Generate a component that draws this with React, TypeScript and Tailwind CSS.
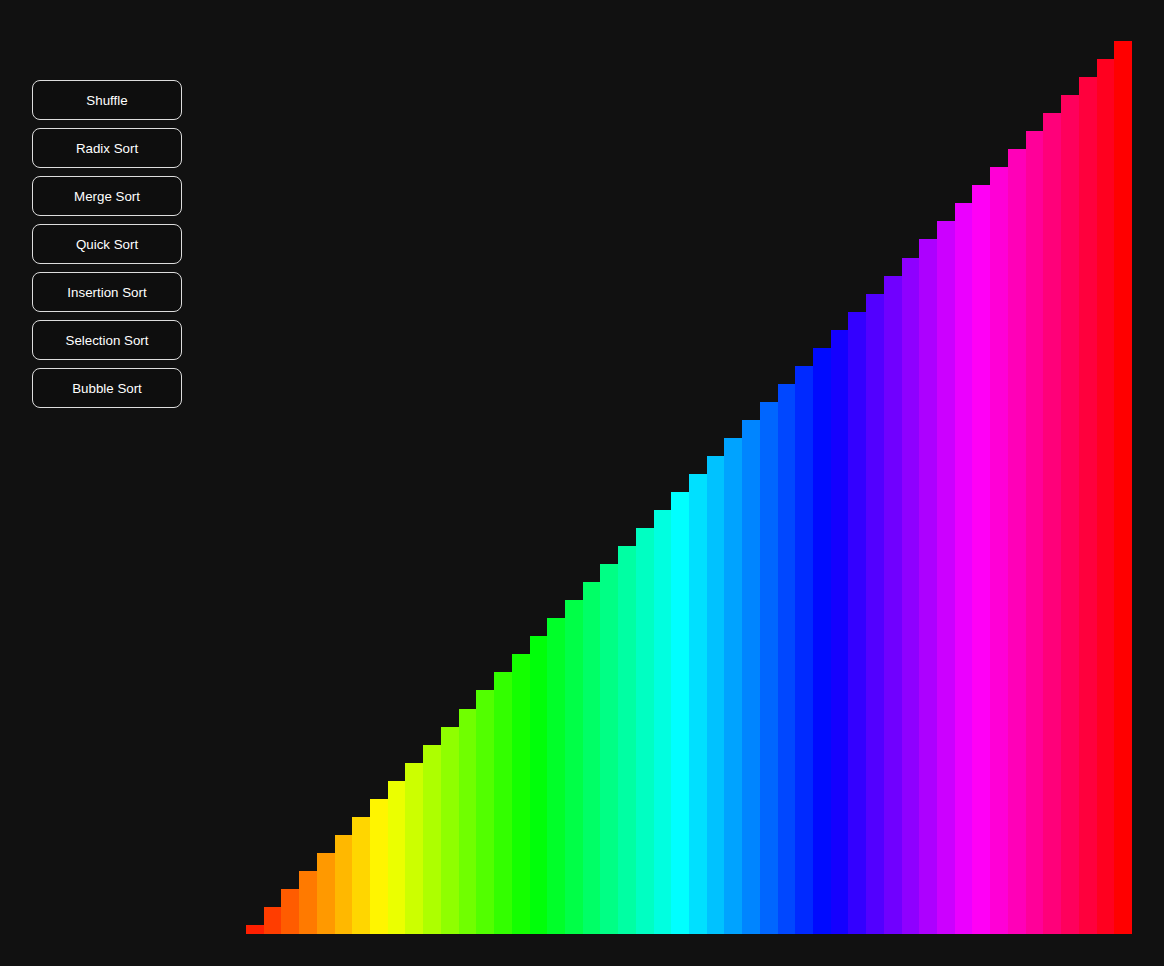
import React from 'react';

const algorithms = ['Shuffle', 'Radix Sort', 'Merge Sort', 'Quick Sort', 'Insertion Sort', 'Selection Sort', 'Bubble Sort'];

const N = 50;
const bars = Array.from({ length: N }, (_, i) => ({
    height: ((i + 0.5) / N) * 100,
    hue: ((i + 1) * 360) / N,
}));

const App = () => {
    return (
        <div className="min-h-[966px] bg-[#111111] flex p-8 gap-16" style={{ fontFamily: '"Liberation Sans", Arial, sans-serif' }}>
            <div className="w-[150px] shrink-0 mt-12 flex flex-col gap-2">
                {algorithms.map((name) => (
                    <button
                        key={name}
                        className="h-10 w-full pt-px rounded-lg border border-[#dddddd] bg-[#0e0e0e] text-white text-[13.33px] font-medium"
                    >
                        {name}
                    </button>
                ))}
            </div>
            <div className="flex-1 h-[902px] flex items-end">
                {bars.map((bar, i) => (
                    <div
                        key={i}
                        className="flex-1"
                        style={{ height: `${bar.height}%`, backgroundColor: `hsl(${bar.hue}, 100%, 50%)` }}
                    />
                ))}
            </div>
        </div>
    );
};

export default App;
